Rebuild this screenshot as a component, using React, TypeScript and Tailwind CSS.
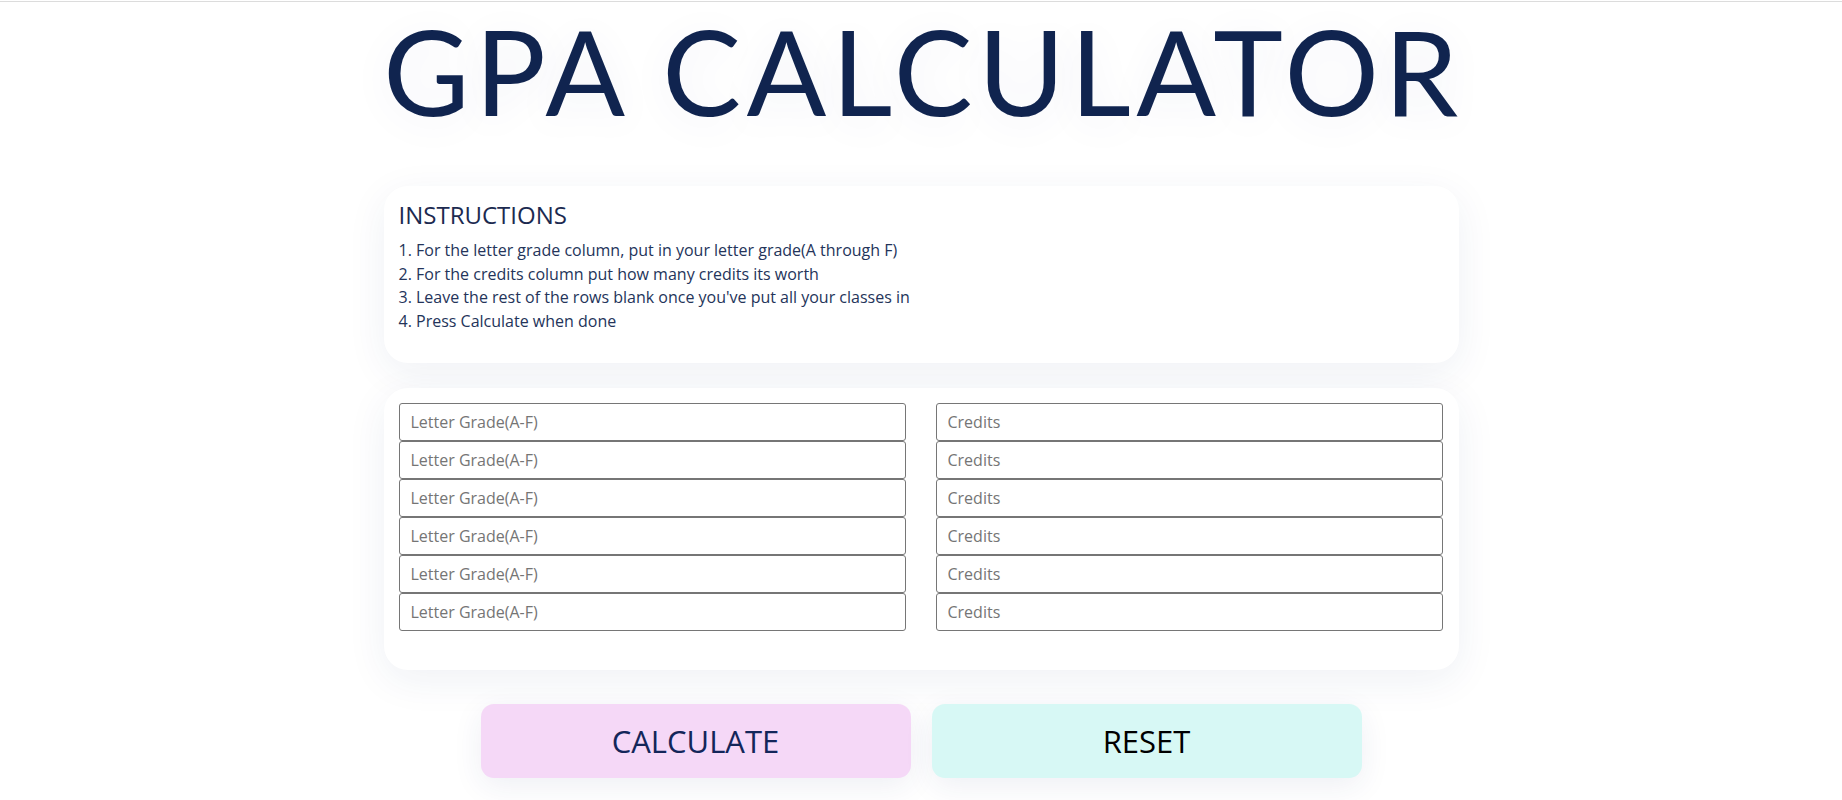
import React, { useState } from "react";

const gradePoints: Record<string, number> = { A: 4, B: 3, C: 2, D: 1, F: 0 };

function App() {
  const [grades, setGrades] = useState<string[]>(["", "", "", "", "", ""]);
  const [credits, setCredits] = useState<string[]>(["", "", "", "", "", ""]);
  const [gpa, setGpa] = useState<string>();

  const changeGrade = (i: number, val: string) => {
    let g = [...grades];
    g[i] = val;
    setGrades(g);
  };
  const changeCredit = (i: number, val: string) => {
    let c = [...credits];
    c[i] = val;
    setCredits(c);
  };

  const calculate = () => {
    let total = 0;
    let hours = 0;
    grades.forEach((g, i) => {
      const p = gradePoints[g.trim().toUpperCase()];
      const c = Number(credits[i]);
      if (p !== undefined && c) {
        total += p * c;
        hours += c;
      }
    });
    setGpa(hours ? (total / hours).toFixed(2) : undefined);
  };

  const reset = () => {
    setGrades(["", "", "", "", "", ""]);
    setCredits(["", "", "", "", "", ""]);
    setGpa(undefined);
  };

  return (
    <div className="min-h-screen bg-white font-['Open_Sans',sans-serif]">
      <div className="h-px mt-px bg-[#dcdcdc]" />
      <h1 className="pt-[10px] pl-[5px] text-center font-['Lato',sans-serif] text-[118px] leading-[118px] font-normal tracking-[5.4px] text-[#10244f] [text-shadow:0_6px_40px_rgba(40,60,130,0.07)]">
        GPA CALCULATOR
      </h1>

      <div className="mx-auto mt-[56px] w-[1075px] rounded-[24px] bg-white px-[15px] pt-[14px] pb-[30px] shadow-[0_10px_40px_rgba(35,50,110,0.07)]">
        <h2 className="mb-[10px] text-[24px] leading-[29px] text-[#1c2a50]">
          INSTRUCTIONS
        </h2>
        <div className="text-[16px] leading-[23.5px] text-[#24345a]">
          <p>1. For the letter grade column, put in your letter grade(A through F)</p>
          <p>2. For the credits column put how many credits its worth</p>
          <p>3. Leave the rest of the rows blank once you've put all your classes in</p>
          <p>4. Press Calculate when done</p>
        </div>
      </div>

      <div className="mx-auto mt-[25px] w-[1075px] rounded-[24px] bg-white pt-[15px] pl-[15px] pr-[16px] pb-[39px] shadow-[0_10px_40px_rgba(35,50,110,0.07)]">
        <div className="grid grid-cols-2 gap-x-[30px]">
          <div className="flex flex-col">
            {grades.map((g, i) => (
              <input
                key={"g" + i}
                type="text"
                value={g}
                onChange={(e) => changeGrade(i, e.currentTarget.value)}
                placeholder="Letter Grade(A-F)"
                className="h-[38px] rounded-[3px] border border-[#767676] px-[11px] text-[16px] text-black placeholder:text-[#757575] outline-none"
              />
            ))}
          </div>
          <div className="flex flex-col">
            {credits.map((c, i) => (
              <input
                key={"c" + i}
                type="text"
                value={c}
                onChange={(e) => changeCredit(i, e.currentTarget.value)}
                placeholder="Credits"
                className="h-[38px] rounded-[3px] border border-[#767676] px-[11px] text-[16px] text-black placeholder:text-[#757575] outline-none"
              />
            ))}
          </div>
        </div>
      </div>

      <div className="mt-[34px] flex justify-center gap-[21px]">
        <button
          onClick={() => calculate()}
          className="h-[74px] w-[430px] rounded-[13px] bg-[#f5d8f7] text-[31px] text-[#13265a] shadow-[0_8px_30px_rgba(35,50,110,0.08)]"
        >
          CALCULATE
        </button>
        <button
          onClick={() => reset()}
          className="h-[74px] w-[430px] rounded-[13px] bg-[#d7f8f5] text-[31px] text-black shadow-[0_8px_30px_rgba(35,50,110,0.08)]"
        >
          RESET
        </button>
      </div>

      {gpa ? (
        <p className="mt-6 pb-10 text-center text-[28px] text-[#10244f]">GPA: {gpa}</p>
      ) : null}
    </div>
  );
}

export default App;
